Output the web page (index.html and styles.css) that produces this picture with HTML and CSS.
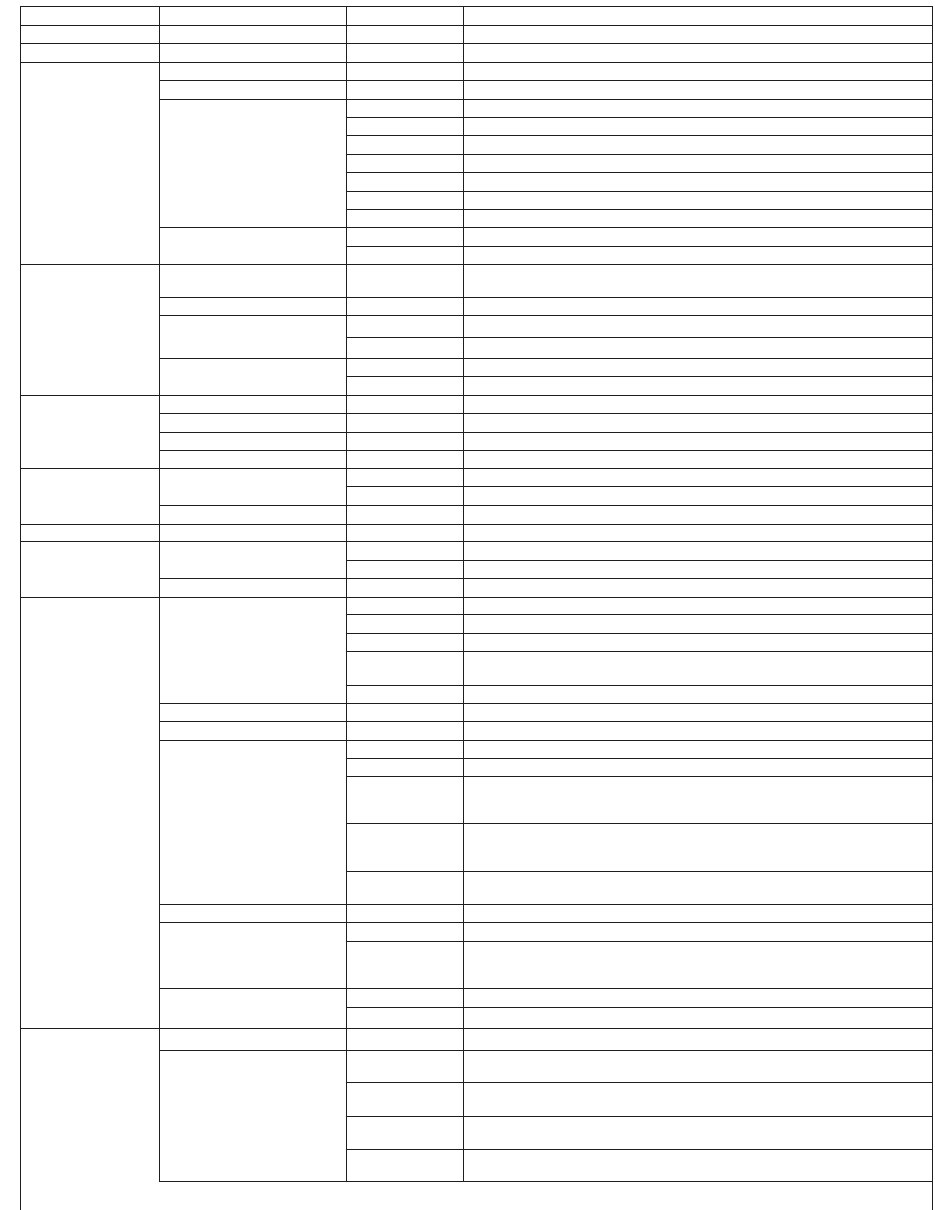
FILE: index.html
```html
<!DOCTYPE html>
<html lang="en">
<head>
<meta charset="utf-8">
<title>Table</title>
<link rel="stylesheet" href="styles.css">
</head>
<body>
<div class="sheet">
  <!-- row 0 -->
  <div class="cell c1"></div><div class="cell c2"></div><div class="cell c3"></div><div class="cell c4"></div>
  <!-- row 1 -->
  <div class="cell c1"></div><div class="cell c2"></div><div class="cell c3"></div><div class="cell c4"></div>
  <!-- row 2 -->
  <div class="cell c1"></div><div class="cell c2"></div><div class="cell c3"></div><div class="cell c4"></div>
  <!-- row 3 -->
  <div class="cell c1 r11"></div><div class="cell c2"></div><div class="cell c3"></div><div class="cell c4"></div>
  <!-- row 4 -->
  <div class="cell c2"></div><div class="cell c3"></div><div class="cell c4"></div>
  <!-- row 5 -->
  <div class="cell c2 r7"></div><div class="cell c3"></div><div class="cell c4"></div>
  <!-- rows 6-11 -->
  <div class="cell c3"></div><div class="cell c4"></div>
  <div class="cell c3"></div><div class="cell c4"></div>
  <div class="cell c3"></div><div class="cell c4"></div>
  <div class="cell c3"></div><div class="cell c4"></div>
  <div class="cell c3"></div><div class="cell c4"></div>
  <div class="cell c3"></div><div class="cell c4"></div>
  <!-- row 12 -->
  <div class="cell c2 r2"></div><div class="cell c3"></div><div class="cell c4"></div>
  <!-- row 13 -->
  <div class="cell c3"></div><div class="cell c4"></div>
  <!-- row 14 -->
  <div class="cell c1 r6"></div><div class="cell c2"></div><div class="cell c3"></div><div class="cell c4"></div>
  <!-- row 15 -->
  <div class="cell c2"></div><div class="cell c3"></div><div class="cell c4"></div>
  <!-- row 16 -->
  <div class="cell c2 r2"></div><div class="cell c3"></div><div class="cell c4"></div>
  <!-- row 17 -->
  <div class="cell c3"></div><div class="cell c4"></div>
  <!-- row 18 -->
  <div class="cell c2 r2"></div><div class="cell c3"></div><div class="cell c4"></div>
  <!-- row 19 -->
  <div class="cell c3"></div><div class="cell c4"></div>
  <!-- row 20 -->
  <div class="cell c1 r4"></div><div class="cell c2"></div><div class="cell c3"></div><div class="cell c4"></div>
  <!-- rows 21-23 -->
  <div class="cell c2"></div><div class="cell c3"></div><div class="cell c4"></div>
  <div class="cell c2"></div><div class="cell c3"></div><div class="cell c4"></div>
  <div class="cell c2"></div><div class="cell c3"></div><div class="cell c4"></div>
  <!-- row 24 -->
  <div class="cell c1 r3"></div><div class="cell c2 r2"></div><div class="cell c3"></div><div class="cell c4"></div>
  <!-- row 25 -->
  <div class="cell c3"></div><div class="cell c4"></div>
  <!-- row 26 -->
  <div class="cell c2"></div><div class="cell c3"></div><div class="cell c4"></div>
  <!-- row 27 -->
  <div class="cell c1"></div><div class="cell c2"></div><div class="cell c3"></div><div class="cell c4"></div>
  <!-- row 28 -->
  <div class="cell c1 r3"></div><div class="cell c2 r2"></div><div class="cell c3"></div><div class="cell c4"></div>
  <!-- row 29 -->
  <div class="cell c3"></div><div class="cell c4"></div>
  <!-- row 30 -->
  <div class="cell c2"></div><div class="cell c3"></div><div class="cell c4"></div>
  <!-- row 31 -->
  <div class="cell c1 r17"></div><div class="cell c2 r5"></div><div class="cell c3"></div><div class="cell c4"></div>
  <!-- rows 32-35 -->
  <div class="cell c3"></div><div class="cell c4"></div>
  <div class="cell c3"></div><div class="cell c4"></div>
  <div class="cell c3"></div><div class="cell c4"></div>
  <div class="cell c3"></div><div class="cell c4"></div>
  <!-- rows 36-37 -->
  <div class="cell c2"></div><div class="cell c3"></div><div class="cell c4"></div>
  <div class="cell c2"></div><div class="cell c3"></div><div class="cell c4"></div>
  <!-- row 38 -->
  <div class="cell c2 r5"></div><div class="cell c3"></div><div class="cell c4"></div>
  <!-- rows 39-42 -->
  <div class="cell c3"></div><div class="cell c4"></div>
  <div class="cell c3"></div><div class="cell c4"></div>
  <div class="cell c3"></div><div class="cell c4"></div>
  <div class="cell c3"></div><div class="cell c4"></div>
  <!-- row 43 -->
  <div class="cell c2"></div><div class="cell c3"></div><div class="cell c4"></div>
  <!-- row 44 -->
  <div class="cell c2 r2"></div><div class="cell c3"></div><div class="cell c4"></div>
  <!-- row 45 -->
  <div class="cell c3"></div><div class="cell c4"></div>
  <!-- row 46 -->
  <div class="cell c2 r2"></div><div class="cell c3"></div><div class="cell c4"></div>
  <!-- row 47 -->
  <div class="cell c3"></div><div class="cell c4"></div>
  <!-- row 48 -->
  <div class="cell c1 r6"></div><div class="cell c2"></div><div class="cell c3"></div><div class="cell c4"></div>
  <!-- row 49 -->
  <div class="cell c2 r4"></div><div class="cell c3"></div><div class="cell c4"></div>
  <!-- rows 50-52 -->
  <div class="cell c3"></div><div class="cell c4"></div>
  <div class="cell c3"></div><div class="cell c4"></div>
  <div class="cell c3"></div><div class="cell c4"></div>
  <!-- row 53: continues below -->
  <div class="tail"></div>
</div>
</body>
</html>
```

FILE: styles.css
```css
html, body {
  margin: 0;
  padding: 0;
  background: #ffffff;
  font-family: "Liberation Sans", Arial, sans-serif;
  overflow: hidden;
}

.sheet {
  box-sizing: border-box;
  margin: 6.3px 0 0 20px;
  width: 913px;
  border-right: 1px solid #1e1e1e;
  display: grid;
  grid-template-columns: 139px 187px 117px 469px;
  grid-template-rows:
    18.7px 18px 18.7px 18.6px 18.4px 18.3px 18.5px 18.5px 18.3px 18.4px
    18.3px 18.5px 18.5px 18px 33px 18px 21.7px 21px 18.6px 19px
    17.7px 19px 17.7px 18.6px 18px 18.7px 18.7px 17.6px 19px 17.7px
    19px 17.3px 19px 17.7px 33.7px 18.6px 17.7px 19px 18px 18.3px
    47.4px 48px 33px 18px 19px 46.6px 19px 20.7px 22px 32.3px
    33.7px 33px 32.7px 28.3px;
}

.cell {
  box-sizing: border-box;
  border-top: 1px solid #1e1e1e;
  border-left: 1px solid #1e1e1e;
}

.c1 { grid-column: 1; }
.c2 { grid-column: 2; }
.c3 { grid-column: 3; }
.c4 { grid-column: 4; }

.r2 { grid-row-end: span 2; }
.r3 { grid-row-end: span 3; }
.r4 { grid-row-end: span 4; }
.r5 { grid-row-end: span 5; }
.r6 { grid-row-end: span 6; }
.r7 { grid-row-end: span 7; }
.r11 { grid-row-end: span 11; }
.r17 { grid-row-end: span 17; }

.tail {
  grid-column: 2 / 5;
  box-sizing: border-box;
  border-top: 1px solid #1e1e1e;
}
```
